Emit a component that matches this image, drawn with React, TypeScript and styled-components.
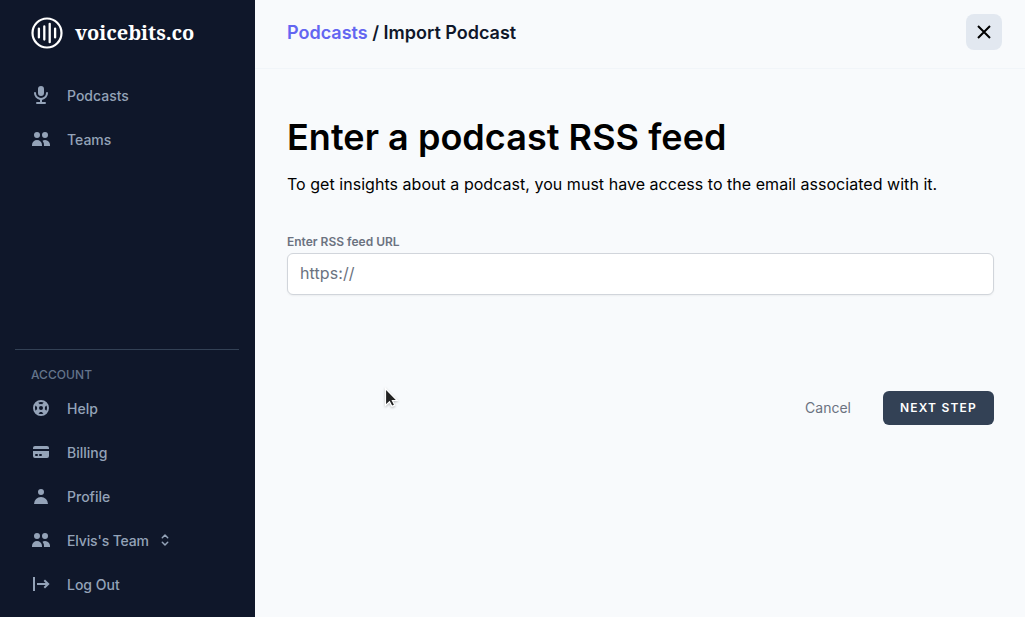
import React from "react";
import styled, { createGlobalStyle } from "styled-components";
import { HiUsers, HiUser, HiMicrophone, HiSupport, HiCreditCard } from "react-icons/hi";

const GlobalStyle = createGlobalStyle`
  *, *::before, *::after { box-sizing: border-box; }
  body { margin: 0; background: #f8fafc; font-family: Inter, "Liberation Sans", sans-serif; }
  button, input { font-family: inherit; }
  a { text-decoration: none; color: inherit; }
`;
const Shell = styled.div`
  display: flex;
  height: 100vh;
  overflow: hidden;
`;
const Sidebar = styled.aside`
  width: 255px;
  flex: none;
  display: flex;
  flex-direction: column;
  justify-content: space-between;
  background: #0f172a;
  padding: 17px 15px 10px;
`;
const Brand = styled.a`
  display: flex;
  align-items: center;
  gap: 12px;
  height: 32px;
  padding-left: 16px;
  margin-bottom: 25px;
`;
const Wordmark = styled.span`
  color: #fff;
  font: 700 20px/32px "Noto Serif", "DejaVu Serif Condensed", "DejaVu Serif", serif;
  letter-spacing: -0.05px;
  white-space: nowrap;
`;
const NavItem = styled.a<{ $tight?: boolean }>`
  display: flex;
  align-items: center;
  height: 44px;
  padding-left: 16px;
  color: #94a3b8;
  font-size: 14px;
  line-height: 20px;
  font-weight: 500;
  letter-spacing: ${(p) => (p.$tight ? "-0.14px" : "normal")};
  svg { flex: none; margin-bottom: 2px; }
`;
const NavText = styled.span`
  margin: 0 9px 0 16px;
`;
const Account = styled.div`
  border-top: 1px solid #334155;
  width: 224px;
  padding-top: 17px;
`;
const GroupLabel = styled.div`
  color: #64748b;
  font-size: 12px;
  line-height: 16px;
  font-weight: 500;
  letter-spacing: 0.05px;
  padding-left: 16px;
  margin-bottom: 4px;
`;
const Main = styled.main`
  flex: 1;
  min-width: 0;
`;
const Header = styled.header`
  display: flex;
  align-items: center;
  justify-content: space-between;
  height: 69px;
  padding: 0 23px 5px 32px;
  border-bottom: 1px solid #f1f5f9;
`;
const Crumbs = styled.div`
  padding-top: 2px;
  font-size: 18px;
  line-height: 28px;
  font-weight: 600;
  color: #0f172a;
  a { color: #6366f1; }
`;
const CloseButton = styled.button`
  display: flex;
  align-items: center;
  justify-content: center;
  width: 36px;
  height: 36px;
  padding: 0;
  border: 0;
  border-radius: 8px;
  background: #e2e8f0;
  color: #000;
`;
const Form = styled.section`
  padding: 48px 31px 0 32px;
`;
const Title = styled.h1`
  margin: 0;
  font-size: 36px;
  line-height: 40px;
  font-weight: 600;
  letter-spacing: 0.04px;
  color: #000;
`;
const Lead = styled.p`
  margin: 15px 0 0;
  font-size: 16px;
  line-height: 24px;
  letter-spacing: 0.035px;
  color: #000;
`;
const Label = styled.label`
  display: block;
  margin-top: 38px;
  font-size: 12px;
  line-height: 16px;
  font-weight: 600;
  color: #6b7280;
`;
const Field = styled.input`
  display: block;
  width: 100%;
  height: 42px;
  margin-top: 3px;
  padding: 7px 12px 9px;
  border: 1px solid #d1d5db;
  border-radius: 6px;
  background: #fff;
  box-shadow: 0 1px 2px rgba(0, 0, 0, 0.05);
  font-size: 16px;
  line-height: 24px;
  letter-spacing: 0.1px;
  &::placeholder { color: #6b7280; opacity: 1; }
`;
const Actions = styled.div`
  display: flex;
  justify-content: flex-end;
  align-items: center;
  gap: 32px;
  margin-top: 96px;
`;
const Cancel = styled.a`
  font-size: 14px;
  line-height: 20px;
  color: #6b7280;
`;
const NextButton = styled.button`
  height: 34px;
  padding: 0 16px;
  border: 1px solid transparent;
  border-radius: 6px;
  background: #334155;
  color: #fff;
  font-size: 12px;
  line-height: 16px;
  font-weight: 600;
  letter-spacing: 1.2px;
`;
const Pointer = styled.svg`
  position: absolute;
  left: 382px;
  top: 386px;
  pointer-events: none;
  filter: drop-shadow(0 1px 1px rgba(0, 0, 0, 0.25));
`;

const Logo = () => (
  <svg width="32" height="32" viewBox="0 0 32 32" fill="none" stroke="#fff" strokeLinecap="round">
    <circle cx="16" cy="16" r="14.5" strokeWidth="2.2" />
    <path d="M7.9 11.6v8.8M13.3 9.4v13.2M18.7 6.8v18.4M24.1 11.6v8.8" strokeWidth="2.3" />
  </svg>
);
const LogOutIcon = () => (
  <svg width="20" height="20" viewBox="0 0 20 20" fill="none" stroke="currentColor" strokeWidth="2">
    <path d="M3 3v14M6 10h11M13.3 6.2L17.2 10l-3.9 3.8" />
  </svg>
);
const Selector = () => (
  <svg width="14" height="14" viewBox="0 0 14 14" fill="none" stroke="currentColor" strokeWidth="1.5" strokeLinecap="round" strokeLinejoin="round">
    <path d="M4.3 4.7L7 2l2.7 2.7M4.3 9.3L7 12l2.7-2.7" />
  </svg>
);

export default function App() {
  return (
    <Shell>
      <GlobalStyle />
      <Sidebar>
        <nav>
          <Brand><Logo /><Wordmark>voicebits.co</Wordmark></Brand>
          <NavItem><HiMicrophone size={20} /><NavText>Podcasts</NavText></NavItem>
          <NavItem><HiUsers size={20} /><NavText>Teams</NavText></NavItem>
        </nav>
        <Account>
          <GroupLabel>ACCOUNT</GroupLabel>
          <NavItem><HiSupport size={20} /><NavText>Help</NavText></NavItem>
          <NavItem><HiCreditCard size={20} /><NavText>Billing</NavText></NavItem>
          <NavItem><HiUser size={20} /><NavText>Profile</NavText></NavItem>
          <NavItem $tight><HiUsers size={20} /><NavText>Elvis's Team</NavText><Selector /></NavItem>
          <NavItem><LogOutIcon /><NavText>Log Out</NavText></NavItem>
        </Account>
      </Sidebar>
      <Main>
        <Header>
          <Crumbs><a>Podcasts</a> / Import Podcast</Crumbs>
          <CloseButton aria-label="Close">
            <svg width="24" height="24" viewBox="0 0 24 24" fill="none" stroke="currentColor" strokeWidth="2">
              <path d="M6 6l12 12M18 6L6 18" />
            </svg>
          </CloseButton>
        </Header>
        <Form>
          <Title>Enter a podcast RSS feed</Title>
          <Lead>To get insights about a podcast, you must have access to the email associated with it.</Lead>
          <Label htmlFor="feed">Enter RSS feed URL</Label>
          <Field id="feed" placeholder="https://" />
          <Actions>
            <Cancel>Cancel</Cancel>
            <NextButton>NEXT STEP</NextButton>
          </Actions>
        </Form>
      </Main>
      <Pointer width="18" height="24" viewBox="0 0 18 24">
        <path d="M3.5 2.5v17l4-3.7 2.4 4.6 2.8-1.3-2.3-4.6h4.8z" fill="#222" stroke="#fff" strokeWidth="1.2" />
      </Pointer>
    </Shell>
  );
}
